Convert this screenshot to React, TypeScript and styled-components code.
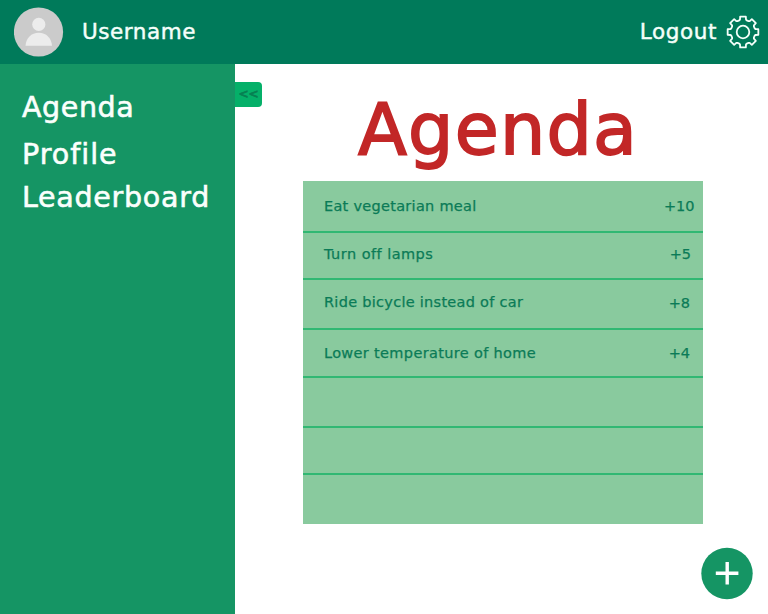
import React from 'react';
import styled, { createGlobalStyle } from 'styled-components';

const GlobalStyle = createGlobalStyle`
  * { box-sizing: border-box; }
  body { margin: 0; background: #fff; font-family: Verdana, 'DejaVu Sans', sans-serif; }
  button { border: 0; padding: 0; background: none; font: inherit; color: inherit; }
`;

const Page = styled.div`
  display: grid;
  grid-template: 64px 550px / 235px 533px;
  width: 768px;
  height: 614px;
  overflow: hidden;
`;

const Header = styled.header`
  grid-column: 1 / -1;
  display: flex;
  align-items: center;
  padding: 0 8px 0 14px;
  background: #007a5a;
  color: #f4fffa;
`;

const HeaderText = styled.span<{ $spacing: number }>`
  font-size: 21.5px;
  line-height: 26px;
  letter-spacing: ${(p) => p.$spacing}px;
  -webkit-text-stroke: 0.45px currentColor;
  white-space: nowrap;
`;

const User = styled.div`
  display: flex;
  align-items: center;
  gap: 18px;
  margin-right: auto;
`;

const Account = styled.div`
  display: flex;
  align-items: center;
  gap: 9px;
`;

const Sidebar = styled.nav`
  display: flex;
  flex-direction: column;
  padding: 26px 0 0 22px;
  background: #159564;
  color: #fafffc;
`;

const NavItem = styled.a<{ $height: number; $spacing: number }>`
  height: ${(p) => p.$height}px;
  font-size: 28.5px;
  line-height: 36px;
  letter-spacing: ${(p) => p.$spacing}px;
  -webkit-text-stroke: 0.6px currentColor;
  white-space: nowrap;
`;

const Main = styled.main`
  display: grid;
  grid-template-columns: 68px 400px 65px;
  align-items: start;
`;

const Collapse = styled.button`
  width: 27px;
  height: 25px;
  margin-top: 18px;
  border-radius: 0 4px 4px 0;
  background: #05b069;
  color: #078052;
  font-size: 12px;
  line-height: 25px;
  -webkit-text-stroke: 0.7px currentColor;
`;

const Content = styled.section`
  display: flex;
  flex-direction: column;
`;

const Title = styled.h1`
  height: 117px;
  margin: 0;
  padding: 21px 0 0 55px;
  color: #c22727;
  font-size: 71.5px;
  font-weight: 400;
  line-height: 90px;
  letter-spacing: 1.2px;
  -webkit-text-stroke: 1.8px currentColor;
  white-space: nowrap;
`;

const List = styled.ul`
  margin: 0;
  padding: 0;
  list-style: none;
  background: #89ca9e;
`;

const Row = styled.li<{ $height: number }>`
  display: flex;
  justify-content: space-between;
  height: ${(p) => p.$height}px;
  padding-left: 21px;
  border-bottom: 2px solid #31b873;
  color: #0b7b57;
  font-size: 14.5px;
  line-height: 20px;
  -webkit-text-stroke: 0.25px currentColor;
  white-space: nowrap;
  &:last-child { border-bottom: 0; }
`;

const Task = styled.span<{ $top: number; $spacing: number }>`
  padding-top: ${(p) => p.$top}px;
  letter-spacing: ${(p) => p.$spacing}px;
`;

const Points = styled.span<{ $top: number; $right: number }>`
  padding: ${(p) => p.$top}px ${(p) => p.$right}px 0 0;
`;

const Aside = styled.aside`
  display: flex;
  align-self: end;
  justify-content: flex-end;
  padding: 0 15px 14px 0;
`;

const AddButton = styled.button`
  display: flex;
  flex: none;
  width: 52px;
  height: 53px;
`;

const rows = [
  { height: 52, task: 'Eat vegetarian meal', top: 15, spacing: 0.28, points: '+10', pointsTop: 15, right: 8.5 },
  { height: 47, task: 'Turn off lamps', top: 11, spacing: 0.46, points: '+5', pointsTop: 11, right: 12 },
  { height: 50, task: 'Ride bicycle instead of car', top: 12, spacing: 0.28, points: '+8', pointsTop: 13, right: 13 },
  { height: 48, task: 'Lower temperature of home', top: 13, spacing: 0.34, points: '+4', pointsTop: 13, right: 13 },
  { height: 50 },
  { height: 47 },
  { height: 49 },
];

const toothProfile = [[-18, 12.2], [-13.5, 12.8], [-10.5, 15.6], [10.5, 15.6], [13.5, 12.8], [18, 12.2]];
const gearPath =
  Array.from({ length: 8 }, (_, i) =>
    toothProfile.map(([deg, r]) => {
      const a = ((deg + i * 45) * Math.PI) / 180;
      return `${(17 + r * Math.cos(a)).toFixed(2)} ${(17 + r * Math.sin(a)).toFixed(2)}`;
    }),
  )
    .flat()
    .map((p, i) => `${i ? 'L' : 'M'}${p}`)
    .join('') + 'Z';

const Avatar = () => (
  <svg width="50" height="50" viewBox="0 0 50 50">
    <circle cx="24.5" cy="25" r="24.6" fill="#cbcbcb" />
    <circle cx="24.8" cy="17.4" r="6.6" fill="#ececec" />
    <path d="M11.5 38.8C12 31 17.3 25.7 24.8 25.7S37.5 31 38 38.8Z" fill="#ececec" />
  </svg>
);

const Gear = () => (
  <svg width="34" height="34" viewBox="0 0 34 34" fill="none" stroke="#f4fffa" strokeWidth="1.8" strokeLinejoin="round">
    <path d={gearPath} />
    <circle cx="17" cy="17" r="6.3" />
  </svg>
);

export default function App() {
  return (
    <>
      <GlobalStyle />
      <Page>
        <Header>
          <User>
            <Avatar />
            <HeaderText $spacing={0.55}>Username</HeaderText>
          </User>
          <Account>
            <HeaderText $spacing={0.6}>Logout</HeaderText>
            <Gear />
          </Account>
        </Header>
        <Sidebar>
          <NavItem $height={47} $spacing={0.6}>Agenda</NavItem>
          <NavItem $height={43} $spacing={1}>Profile</NavItem>
          <NavItem $height={36} $spacing={0.72}>Leaderboard</NavItem>
        </Sidebar>
        <Main>
          <Collapse aria-label="Collapse sidebar">&lt;&lt;</Collapse>
          <Content>
            <Title>Agenda</Title>
            <List>
              {rows.map((row, i) => (
                <Row key={i} $height={row.height}>
                  {row.task && (
                    <>
                      <Task $top={row.top} $spacing={row.spacing}>{row.task}</Task>
                      <Points $top={row.pointsTop} $right={row.right}>{row.points}</Points>
                    </>
                  )}
                </Row>
              ))}
            </List>
          </Content>
          <Aside>
            <AddButton aria-label="Add item">
              <svg width="52" height="53" viewBox="0 0 52 53">
                <circle cx="26" cy="26.5" r="25.7" fill="#159564" />
                <path d="M14.8 26.3H37.4M26.2 15V37.6" stroke="#fff" strokeWidth="3.4" />
              </svg>
            </AddButton>
          </Aside>
        </Main>
      </Page>
    </>
  );
}
